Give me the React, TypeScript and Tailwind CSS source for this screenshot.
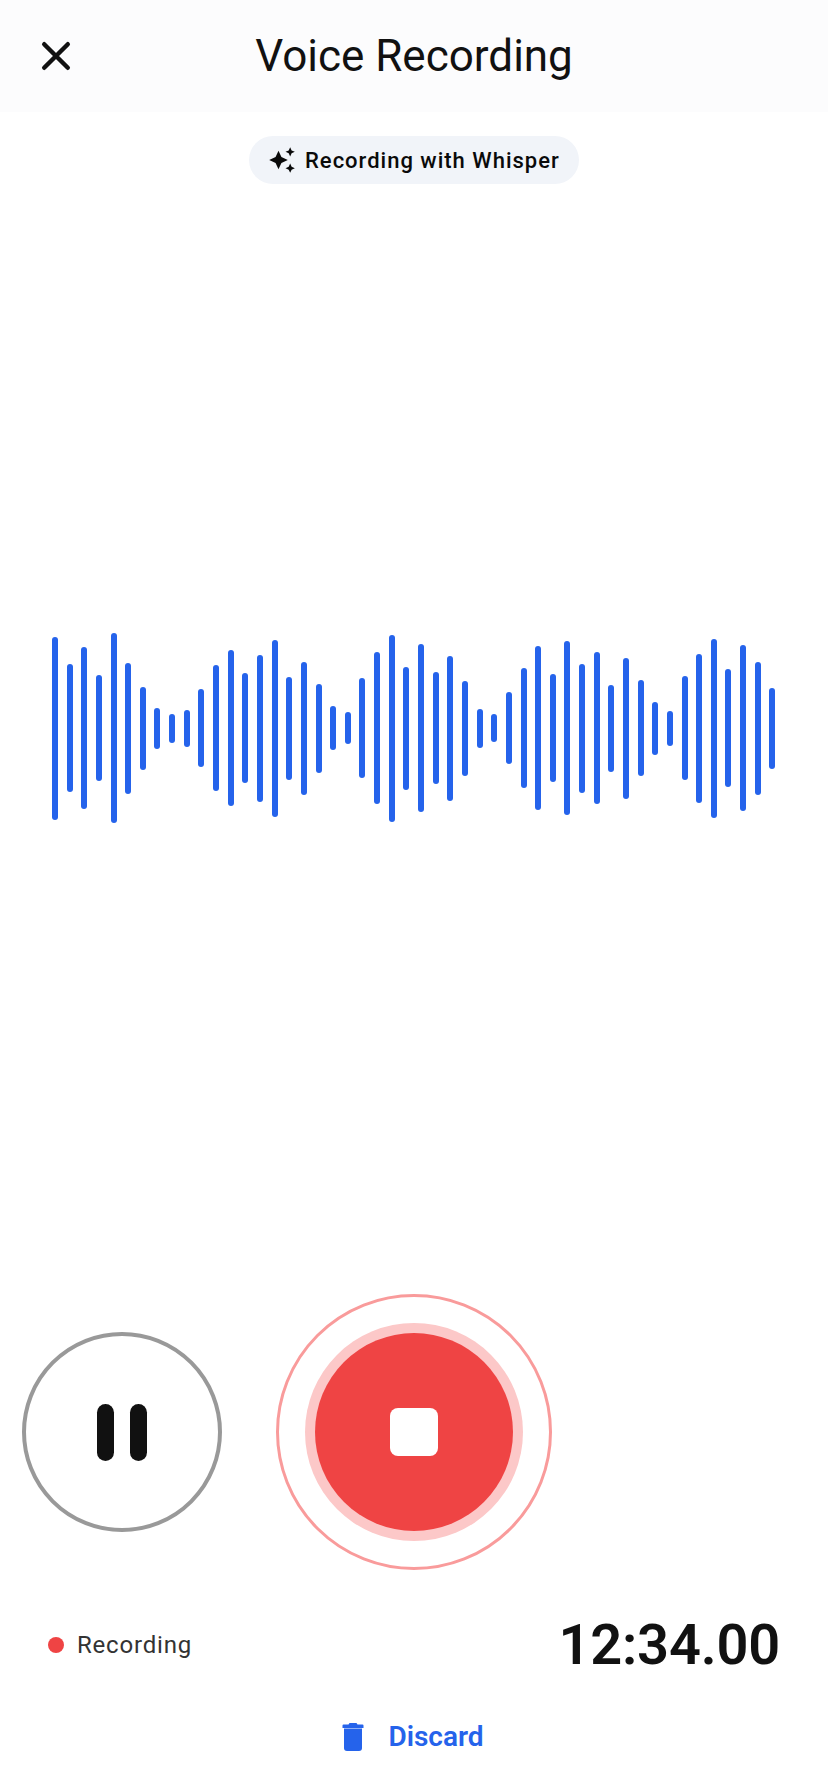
import { MdAutoAwesome } from "react-icons/md";

// bar heights read off the reference, left to right
const bars = [
  183, 128, 162, 106, 190, 131, 83, 41, 29, 37, 78, 126, 156, 110, 147, 177, 103, 133, 89, 44, 32,
  100, 152, 187, 123, 168, 112, 145, 95, 39, 28, 72, 120, 164, 108, 174, 129, 152, 87, 141, 96, 53,
  35, 104, 149, 179, 118, 166, 133, 81,
];

export default function App() {
  return (
    <div className="flex min-h-[1792px] w-[828px] flex-col bg-white font-['Roboto',sans-serif]">
      <header className="flex h-[112px] shrink-0 items-center justify-center bg-[#fcfcfd] relative">
        <button className="absolute left-[41px] top-[41px] text-[#111111]">
          <svg className="h-[30px] w-[30px]" viewBox="0 0 30 30" fill="none" stroke="currentColor" strokeWidth="4.4" strokeLinecap="round">
            <path d="M3.2 3.2l23.6 23.6M26.8 3.2L3.2 26.8" />
          </svg>
        </button>
        <h1 className="text-[44px] font-normal text-[#111111]">Voice Recording</h1>
      </header>

      <div className="mt-6 flex justify-center">
        <div className="flex h-12 w-[330px] items-center gap-[9px] rounded-full bg-[#f1f4f9] pl-[19px]">
          <MdAutoAwesome className="h-[28px] w-[28px] text-[#0a0a0a]" />
          <span className="text-[22px] font-medium tracking-[1px] text-[#0a0a0a]">
            Recording with Whisper
          </span>
        </div>
      </div>

      <div className="mt-[444px] flex h-[200px] items-center justify-between px-[52px]">
        {bars.map((h, i) => (
          <div key={i} className="w-[6px] rounded-full bg-[#2563eb]" style={{ height: h }} />
        ))}
      </div>

      <div className="mt-[466px] flex items-center pl-[22px]">
        <button className="flex h-[200px] w-[200px] items-center justify-center gap-[16px] rounded-full border-4 border-[#999999]">
          <span className="h-[57px] w-[17px] rounded-full bg-[#111111]" />
          <span className="h-[57px] w-[17px] rounded-full bg-[#111111]" />
        </button>
        <div className="ml-[54px] flex h-[276px] w-[276px] items-center justify-center rounded-full border-[3px] border-[#f99b9b]">
          <div className="flex h-[218px] w-[218px] items-center justify-center rounded-full bg-[#fcc8c8]">
            <div className="flex h-[198px] w-[198px] items-center justify-center rounded-full bg-[#ef4444]">
              <div className="h-[48px] w-[48px] rounded-lg bg-white" />
            </div>
          </div>
        </div>
      </div>

      <div className="mt-[42px] flex h-[66px] items-center justify-between pl-[48px] pr-[48px]">
        <div className="flex items-center gap-[13px]">
          <span className="h-4 w-4 rounded-full bg-[#ef4444]" />
          <span className="text-[24px] tracking-[0.8px] text-[#333333]">Recording</span>
        </div>
        <span className="text-[56px] font-semibold tracking-[-0.2px] text-[#111111]">12:34.00</span>
      </div>

      <div className="mt-[38px] flex items-center justify-center gap-[24px] pr-[2px] text-[#2563eb]">
        <svg className="h-[28px] w-[22px]" viewBox="0 0 22 28" fill="currentColor">
          <path d="M7.5 0h7l1 1.5H20.5a1 1 0 0 1 1 1V5H.5V2.500a1 1 0 0 1 1-1H6.500z" />
          <path d="M2 5.500h18V25a3 3 0 0 1-3 3H5a3 3 0 0 1-3-3z" />
        </svg>
        <span className="text-[28px] font-semibold">Discard</span>
      </div>
    </div>
  );
}
